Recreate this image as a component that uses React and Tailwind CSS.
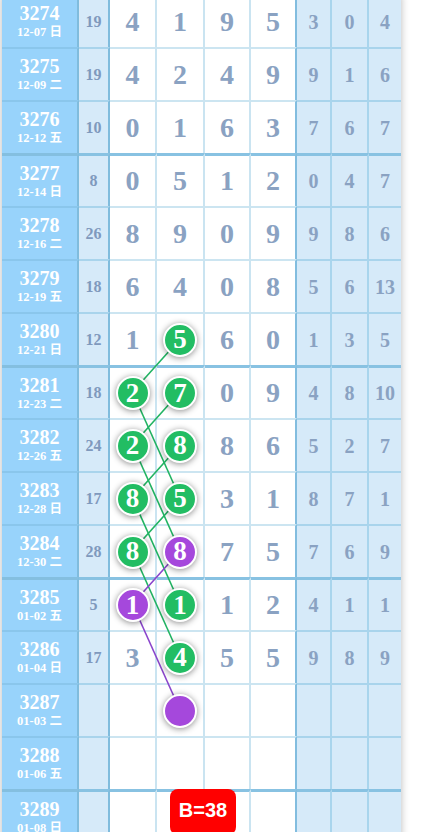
import React from "react";

const rows = [
  ["3274", "12-07 日", "19", ["4", "1", "9", "5"], ["3", "0", "4"]],
  ["3275", "12-09 二", "19", ["4", "2", "4", "9"], ["9", "1", "6"]],
  ["3276", "12-12 五", "10", ["0", "1", "6", "3"], ["7", "6", "7"]],
  ["3277", "12-14 日", "8", ["0", "5", "1", "2"], ["0", "4", "7"]],
  ["3278", "12-16 二", "26", ["8", "9", "0", "9"], ["9", "8", "6"]],
  ["3279", "12-19 五", "18", ["6", "4", "0", "8"], ["5", "6", "13"]],
  ["3280", "12-21 日", "12", ["1", "5", "6", "0"], ["1", "3", "5"]],
  ["3281", "12-23 二", "18", ["2", "7", "0", "9"], ["4", "8", "10"]],
  ["3282", "12-26 五", "24", ["2", "8", "8", "6"], ["5", "2", "7"]],
  ["3283", "12-28 日", "17", ["8", "5", "3", "1"], ["8", "7", "1"]],
  ["3284", "12-30 二", "28", ["8", "8", "7", "5"], ["7", "6", "9"]],
  ["3285", "01-02 五", "5", ["1", "1", "1", "2"], ["4", "1", "1"]],
  ["3286", "01-04 日", "17", ["3", "4", "5", "5"], ["9", "8", "9"]],
  ["3287", "01-03 二", "", ["", "", "", ""], ["", "", ""]],
  ["3288", "01-06 五", "", ["", "", "", ""], ["", "", ""]],
  ["3289", "01-08 日", "", ["", "", "", ""], ["", "", ""]],
];

// balls keyed by "row index-column index" -> colour
const balls = {
  "6-1": "g",
  "7-0": "g",
  "7-1": "g",
  "8-0": "g",
  "8-1": "g",
  "9-0": "g",
  "9-1": "g",
  "10-0": "g",
  "10-1": "p",
  "11-0": "p",
  "11-1": "g",
  "12-1": "g",
  "13-1": "p",
};

const C = [130.5, 178];
const rowY = (i) => 53 * i + 27;

const links = [
  [1, 6, 0, 7, "g"],
  [0, 7, 1, 9, "g"],
  [1, 7, 0, 8, "g"],
  [0, 8, 1, 10, "g"],
  [1, 8, 0, 9, "g"],
  [0, 9, 1, 11, "g"],
  [1, 9, 0, 10, "g"],
  [0, 10, 1, 12, "g"],
  [1, 10, 0, 11, "p"],
  [0, 11, 1, 13, "p"],
];

const serif = "font-['Liberation_Serif','Noto_Sans_CJK_SC',serif] font-bold";

function Ball({ color, value }) {
  return (
    <div
      className={`relative z-[2] flex h-[34px] w-[34px] items-center justify-center rounded-full border-2 border-white text-[27px] leading-none text-white shadow-[0_1px_6px_rgba(0,0,0,0.45)] ${
        color === "g" ? "bg-[#22bd63]" : "bg-[#a548dc]"
      }`}
    >
      {value}
    </div>
  );
}

function Row({ r, i }) {
  const [name, date, sum, digits, small] = r;
  const thick = i % 4 === 3;
  const hb = thick ? "border-t-[3px] border-t-[#88c2e2]" : "border-t-2 border-t-[#cce5f1]";
  const hbBlue = thick ? "border-t-[3px] border-t-[#88c2e2]" : "border-t-2 border-t-[#a9d4ec]";
  const hbName = thick ? "border-t-[3px] border-t-[#84bfe0]" : "border-t-2 border-t-[#8ac6ec]";
  const digitR = [
    "w-[47px] border-r-2 border-r-[#cae4f1]",
    "w-[48px] border-r-2 border-r-[#cae4f1]",
    "w-[46px] border-r-2 border-r-[#cae4f1]",
    "w-[46px] border-r-2 border-r-[#82bddf]",
  ];
  const smallR = [
    "w-[35px] border-r-2 border-r-[#a9d5ed]",
    "w-[37px] border-r-2 border-r-[#a9d5ed]",
    "w-[32px]",
  ];

  return (
    <div className="flex h-[53px]">
      <div
        className={`flex w-[77px] flex-col items-center justify-center border-r-2 border-r-[#80bcdd] bg-[#98d3fb] pt-[1px] text-white ${hbName} ${serif}`}
      >
        <div className="text-[20px] leading-[20px]">{name}</div>
        <div className="text-[12.5px] leading-[18px]">{date}</div>
      </div>
      <div
        className={`flex w-[31px] items-center justify-center border-r-2 border-r-[#80bcdd] bg-[#d6eaf9] text-[16px] text-[#7f99bd] ${hbBlue} ${serif}`}
      >
        {sum}
      </div>
      {digits.map((d, j) => {
        const ball = balls[`${i}-${j}`];
        return (
          <div
            key={j}
            className={`flex items-center justify-center bg-white text-[28px] text-[#8aa2c2] ${digitR[j]} ${hb} ${serif}`}
          >
            {ball ? <Ball color={ball} value={d} /> : d}
          </div>
        );
      })}
      {small.map((d, j) => (
        <div
          key={j}
          className={`flex items-center justify-center bg-[#d6eaf9] text-[20px] text-[#8aa2c2] ${smallR[j]} ${hbBlue} ${serif}`}
        >
          {d}
        </div>
      ))}
    </div>
  );
}

export default function App() {
  return (
    <div className="h-[832px] w-[426px] overflow-hidden bg-white">
      <div className="relative ml-[2px] -mt-[6px] w-[399px] shadow-[0_0_8px_rgba(0,0,0,0.28)]">
        {rows.map((r, i) => (
          <Row key={r[0]} r={r} i={i} />
        ))}

        <svg
          className="pointer-events-none absolute left-0 top-0 z-[1]"
          width="399"
          height="848"
        >
          {links.map(([c1, r1, c2, r2, col], k) => (
            <line
              key={k}
              x1={C[c1]}
              y1={rowY(r1)}
              x2={C[c2]}
              y2={rowY(r2)}
              stroke={col === "g" ? "#22b463" : "#8a45cc"}
              strokeWidth="1.6"
            />
          ))}
        </svg>

        {/* B value badge */}
        <div className="absolute left-[168px] top-[795px] z-[3] flex h-[46px] w-[66px] items-center justify-center rounded-[8px] bg-[#ff0000] pb-[4px] font-['Liberation_Sans',Arial,sans-serif] text-[20px] font-bold text-white">
          B=38
        </div>
      </div>
    </div>
  );
}
